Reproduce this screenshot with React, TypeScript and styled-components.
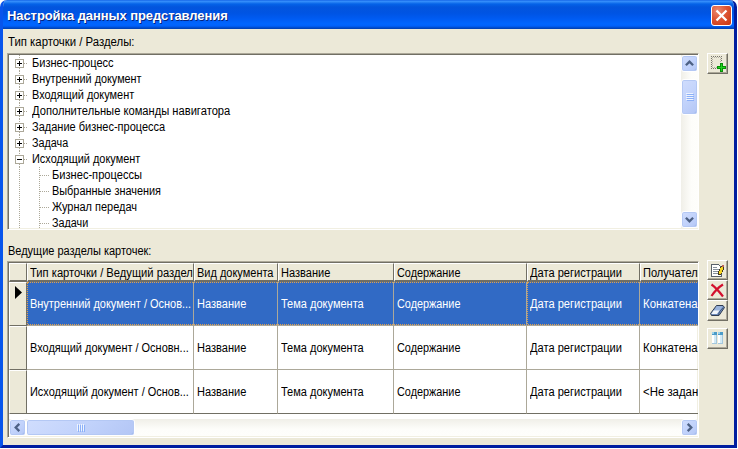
import React from 'react';
import styled, { createGlobalStyle, css } from 'styled-components';

const Global = createGlobalStyle`
  * { box-sizing: border-box; }
  html, body { margin: 0; background: #fff; overflow: hidden; }
  body { font: 12px/16px "Liberation Sans", Arial, sans-serif; color: #000; }
  svg { display: block; flex: none; }
`;

const Dialog = styled.div`
  width: 737px; height: 448px; background: #ece9d8; border-radius: 7px 7px 0 0;
  display: flex; flex-direction: column; overflow: hidden;
  border: solid; border-width: 0 3px 3px;
  border-color: #0831d9 #001ea0 #001ea0 #0855ec;
`;
const TitleBar = styled.header`
  height: 29px; margin: 0 -3px; flex: none; display: flex; align-items: center;
  justify-content: space-between; padding: 2px 5px 0 7px;
  background: linear-gradient(#0855dd 0, #3a93ff 1px, #2b85f5 2px, #0563e8 4px, #0355dd 7px, #0054e3 13px, #005af0 18px, #0066ff 24px, #0061fa 26px, #0048c4 28px, #003fae 29px);
`;
const Title = styled.h1`
  margin: 1px 0 0; font: bold 13px/20px "Liberation Sans", Arial, sans-serif; color: #fff;
  letter-spacing: -0.08px; text-shadow: 1px 1px #06247c; white-space: nowrap;
`;
const Close = styled.button`
  width: 21px; height: 21px; padding: 0; border: 1px solid #fff; border-radius: 3px; flex: none;
  display: grid; place-items: center;
  background: radial-gradient(circle at 30% 25%, #eb8a70 0, #dd5534 45%, #c8350f 100%);
`;
const Body = styled.main`
  flex: 1; display: flex; flex-direction: column; padding: 0 6px 7px 4px;
`;
/* Narrow lettering: the face is condensed horizontally to the given ratio. */
const Text = styled.span<{ $s?: number }>`
  display: inline-block; white-space: nowrap; line-height: 16px;
  transform: scaleX(${p => p.$s ?? 0.915}); transform-origin: 0 50%;
`;
const Caption = styled.div<{ $h: number; $top: number }>`
  height: ${p => p.$h}px; padding: ${p => p.$top}px 0 0 1px; flex: none;
`;
const Band = styled.section<{ $h: number }>`
  display: flex; align-items: flex-start; gap: 8px; height: ${p => p.$h}px; flex: none;
`;
const sunken = css`
  border: 1px solid; border-color: #aca899 #fff #fff #aca899;
  box-shadow: inset 1px 1px #716f64, inset -1px -1px #f1efe2;
  padding: 1px 0 1px 1px; width: 692px; height: 177px; background: #fff; display: flex;
`;
const TreeBox = styled.div`${sunken}`;
const Nodes = styled.div`flex: 1; height: 173px; overflow: hidden;`;
const Node = styled.div`height: 16px; display: flex; padding-left: 6px;`;
const NodeText = styled(Text)`margin-left: 0.5px;`;

const Track = styled.div<{ $horizontal?: boolean }>`
  display: flex; flex: none; flex-direction: ${p => (p.$horizontal ? 'row' : 'column')};
  width: ${p => (p.$horizontal ? '689px' : '17px')}; height: ${p => (p.$horizontal ? '17px' : '173px')};
  background: linear-gradient(${p => (p.$horizontal ? '180deg' : '90deg')}, #f0efe8, #fdfdfa 60%, #fefefb);
`;
const blue = css`
  border: 1px solid #fff; border-radius: 3px;
  box-shadow: inset 0 0 0 1px #b4c8f4, inset -1px -1px #98b0e8;
  background: linear-gradient(135deg, #d0ddfd, #c1d2fb 55%, #b3c6f5);
`;
const Arrow = styled.button`
  ${blue} width: 17px; height: 17px; padding: 0; display: grid; place-items: center; flex: none;
`;
const Thumb = styled.div<{ $horizontal?: boolean; $before: number; $size: number }>`
  ${blue} display: grid; place-items: center; flex: none;
  width: ${p => (p.$horizontal ? p.$size : 17)}px; height: ${p => (p.$horizontal ? 17 : p.$size)}px;
  margin: ${p => (p.$horizontal ? `0 0 0 ${p.$before}px` : `${p.$before}px 0 0`)};
`;
const Fill = styled.div`flex: 1;`;

const GridBox = styled.div`${sunken} flex-direction: column;`;
const Row = styled.div<{ $h: number }>`
  display: flex; height: ${p => p.$h}px; width: 689px; overflow: hidden; flex: none;
`;
const HeadCell = styled.div<{ $w: number }>`
  width: ${p => p.$w}px; flex: none; overflow: hidden; white-space: nowrap;
  background: #ece9d8; border: solid; border-width: 1px 1px 2px;
  border-color: #fff #716f64 #716f64 #fff; padding: 1px 0 0 1.5px;
`;
const Selector = styled.div`
  width: 18px; flex: none; background: #ece9d8; border: 1px solid;
  border-color: #fff #716f64 #716f64 #fff; padding: 3px 0 0 5px;
`;
const dots = 'repeating-linear-gradient(90deg, #e0a050 0 1px, #316ac5 1px 2px)';
const Cell = styled.div<{ $w: number; $sel?: boolean; $focus?: boolean; $end?: boolean; $last?: boolean }>`
  width: ${p => p.$w}px; flex: none; overflow: hidden; white-space: nowrap;
  display: flex; align-items: center; padding: 1px 0 0 2.5px;
  border: solid; border-width: 0 1px 1px 0;
  border-color: ${p => (p.$end ? 'transparent' : '#aca899')};
  border-bottom-color: ${p => (p.$last ? '#716f64' : '#aca899')};
  ${p => p.$sel && css`
    color: #fff;
    background: ${dots} 0 0 / 100% 1px no-repeat, ${dots} 0 100% / 100% 1px no-repeat, #316ac5;
    background-clip: padding-box;
  `}
  ${p => p.$focus && css`border-left: 1px dotted #e0a050; padding-left: 1.5px; background-clip: border-box; background-origin: padding-box;`}
  ${p => p.$sel && p.$end && css`border-right: 1px dotted #e0a050; background-clip: border-box;`}
`;
const Side = styled.nav<{ $up?: boolean }>`
  display: flex; flex-direction: column; ${p => p.$up && 'margin-top: -1px;'}
`;
const Tool = styled.button<{ $gap?: number; $h?: number }>`
  width: 21px; height: ${p => p.$h ?? 21}px; padding: 0; margin-top: ${p => p.$gap ?? 0}px;
  background: #ece9d8; border: 1px solid; border-color: #fff #716f64 #716f64 #fff;
  box-shadow: inset -1px -1px #aca899; display: grid; place-items: center; flex: none;
`;
const Crisp = styled.svg`shape-rendering: crispEdges;`;

function Chevron({ turn }: { turn: number }) {
  return (
    <svg width="9" height="9" viewBox="0 0 9 9" fill="none" stroke="#4d6185" strokeWidth="2.3">
      <path d="M.9 6.3 4.5 2.7l3.6 3.6" transform={`rotate(${turn} 4.5 4.5)`} />
    </svg>
  );
}
function Grip({ horizontal }: { horizontal?: boolean }) {
  return (
    <Crisp width="8" height="8" viewBox="0 0 8 8">
      <g transform={horizontal ? 'matrix(0 1 1 0 0 0)' : undefined}>
        <path d="M0 .5h7M0 2.5h7M0 4.5h7M0 6.5h7" stroke="#eef4fe" />
        <path d="M1 1.5h7M1 3.5h7M1 5.5h7M1 7.5h7" stroke="#8cb0f8" />
      </g>
    </Crisp>
  );
}
function Branch({ open }: { open?: boolean }) {
  return (
    <Crisp width="16" height="16" viewBox="0 0 16 16">
      <path d="M4.5 0v4M4.5 13v3M9 8.5h4" stroke="#aca899" strokeDasharray="1 1" fill="none" />
      <rect x=".5" y="4.5" width="8" height="8" fill="#fff" stroke="#aca899" />
      <path d={open ? 'M2 8.5h5' : 'M2 8.5h5M4.5 6v5'} stroke="#000" />
    </Crisp>
  );
}
function Leaf() {
  return (
    <Crisp width="36" height="16" viewBox="0 0 36 16">
      <path d="M4.5 0v16M24.5 0v16M25 8.5h9" stroke="#aca899" strokeDasharray="1 1" fill="none" />
    </Crisp>
  );
}
const AddArea = () => (
  <Crisp width="17" height="17" viewBox="0 0 17 17" fill="none">
    <path d="M2 1.5h11M2 13.5h6M2.5 1v13M12.5 1v6" stroke="#77756c" strokeDasharray="1 1" />
    <path d="M3 2.5h9M3 12.5h5M3.5 2v11M11.5 2v5" stroke="#b5b2a6" strokeDasharray="1 1" />
    <path d="M11 8h3v3h3v3h-3v3h-3v-3H8v-3h3z" fill="#078f07" />
    <path d="M12.5 9v7M9 12.5h7" stroke="#1ed31e" />
  </Crisp>
);
const Edit = () => (
  <Crisp width="15" height="15" viewBox="0 0 15 15" fill="none">
    <path d="M1.5 1.5h7l3 3v9h-10z" fill="#fff" stroke="#59616a" />
    <path d="M3 4.500h4M3 6.500h6M3 8.500h6M3 10.500h5" stroke="#87919c" />
    <path d="M11 3h3v3l-3 6H8V9z" fill="#43391e" />
    <path d="M11 4h2v2l-2 5H9V9z" fill="#f6d51f" />
    <path d="M12 2h2v2h-2z" fill="#bd6258" />
  </Crisp>
);
const Delete = () => (
  <svg width="15" height="15" viewBox="0 0 15 15" fill="none">
    <path d="M1.500 1.500Q6 4.500 13 13.500M13 1.500Q7 5 1.500 13" stroke="#d3102e" strokeWidth="2.2" />
  </svg>
);
const Eraser = () => (
  <svg width="17" height="15" viewBox="0 0 17 15" fill="none">
    <path d="M7.500 2.500h6.500l1.500 2-5.500 8H2.500l-1-2z" fill="#6f8cbc" stroke="#303c50" />
    <path d="m7.800 3 6 .2L10.500 8H4.500z" fill="#9bb4dc" />
    <path d="M4.500 7.500h6l-2.500 3.500H2.300z" fill="#f2f6fb" />
    <path d="m9.200 12 1.800-4 3.500-3.500" stroke="#455d83" />
  </svg>
);
const Columns = () => (
  <Crisp width="15" height="15" viewBox="0 0 15 15">
    <path d="M2 1h5v12H2zM8 1h5v12H8z" fill="#a5c8dd" />
    <path d="M2 4h4v8H2zM8 4h4v8H8z" fill="#fff" />
    <path d="M2 1h5v3H2zM8 1h5v3H8z" fill="#4a9bc8" />
    <path d="M2 1h2v2H2zM8 1h2v2H8z" fill="#9bd2eb" />
    <path d="M4 4h2v8H4zM10 4h2v8h-2z" fill="#d3eaf5" />
  </Crisp>
);

const roots: [string, number][] = [
  ['Бизнес-процесс', 0.921], ['Внутренний документ', 0.902], ['Входящий документ', 0.911],
  ['Дополнительные команды навигатора', 0.93], ['Задание бизнес-процесса', 0.917], ['Задача', 0.9],
  ['Исходящий документ', 0.91],
];
const leaves: [string, number][] = [
  ['Бизнес-процессы', 0.925], ['Выбранные значения', 0.908], ['Журнал передач', 0.914], ['Задачи', 0.9],
];
const widths = [167, 84, 116, 133, 113, 59];
const heads: [string, number][] = [
  ['Тип карточки / Ведущий раздел', 0.932], ['Вид документа', 0.915], ['Название', 0.92],
  ['Содержание', 0.905], ['Дата регистрации', 0.925], ['Получатели', 0.92],
];
const ratios = [0.913, 0.92, 0.918, 0.905, 0.925, 0.95];
const rows = [
  ['Внутренний документ / Основ...', 'Название', 'Тема документа', 'Содержание', 'Дата регистрации', 'Конкатенация'],
  ['Входящий документ / Основн...', 'Название', 'Тема документа', 'Содержание', 'Дата регистрации', 'Конкатенация'],
  ['Исходящий документ / Основ...', 'Название', 'Тема документа', 'Содержание', 'Дата регистрации', '<Не задано>'],
];

export default function App() {
  return (
    <>
      <Global />
      <Dialog>
        <TitleBar>
          <Title>Настройка данных представления</Title>
          <Close aria-label="Закрыть">
            <svg width="13" height="13" viewBox="0 0 13 13">
              <path d="m1.500 1.500 10 10m0-10-10 10" stroke="#fff" strokeWidth="2.3" />
            </svg>
          </Close>
        </TitleBar>
        <Body>
          <Caption $h={24} $top={5}><Text $s={0.947}>Тип карточки / Разделы:</Text></Caption>
          <Band $h={177}>
            <TreeBox>
              <Nodes>
                {roots.map(([name, s], i) => (
                  <Node key={name}><Branch open={i === 6} /><NodeText $s={s}>{name}</NodeText></Node>
                ))}
                {leaves.map(([name, s]) => (
                  <Node key={name}><Leaf /><NodeText $s={s}>{name}</NodeText></Node>
                ))}
              </Nodes>
              <Track>
                <Arrow aria-label="Вверх"><Chevron turn={0} /></Arrow>
                <Thumb $before={7} $size={36}><Grip /></Thumb>
                <Fill />
                <Arrow aria-label="Вниз"><Chevron turn={180} /></Arrow>
              </Track>
            </TreeBox>
            <Side><Tool aria-label="Добавить"><AddArea /></Tool></Side>
          </Band>
          <Caption $h={31} $top={13}><Text $s={0.916}>Ведущие разделы карточек:</Text></Caption>
          <Band $h={177}>
            <GridBox>
              <Row $h={19}>
                <HeadCell $w={18} />
                {heads.map(([name, s], i) => (
                  <HeadCell key={name} $w={i === 5 ? 60 : widths[i]}><Text $s={s}>{name}</Text></HeadCell>
                ))}
              </Row>
              {rows.map((row, r) => (
                <Row key={r} $h={44}>
                  <Selector>
                    {r === 0 && <svg width="7" height="13" viewBox="0 0 7 13"><path d="M0 0l7 6.500L0 13z" /></svg>}
                  </Selector>
                  {row.map((text, c) => (
                    <Cell
                      key={c} $w={widths[c]} $sel={r === 0} $focus={r === 0 && (c === 0 || c === 4)}
                      $end={c === 5} $last={r === 2}
                    >
                      <Text $s={ratios[c]}>{text}</Text>
                    </Cell>
                  ))}
                </Row>
              ))}
              <Fill />
              <Track $horizontal>
                <Arrow aria-label="Влево"><Chevron turn={-90} /></Arrow>
                <Thumb $horizontal $before={0} $size={109}><Grip horizontal /></Thumb>
                <Fill />
                <Arrow aria-label="Вправо"><Chevron turn={90} /></Arrow>
              </Track>
            </GridBox>
            <Side $up>
              <Tool $h={20} aria-label="Изменить"><Edit /></Tool>
              <Tool $h={20} aria-label="Удалить"><Delete /></Tool>
              <Tool aria-label="Очистить"><Eraser /></Tool>
              <Tool $gap={7} aria-label="Столбцы"><Columns /></Tool>
            </Side>
          </Band>
        </Body>
      </Dialog>
    </>
  );
}
